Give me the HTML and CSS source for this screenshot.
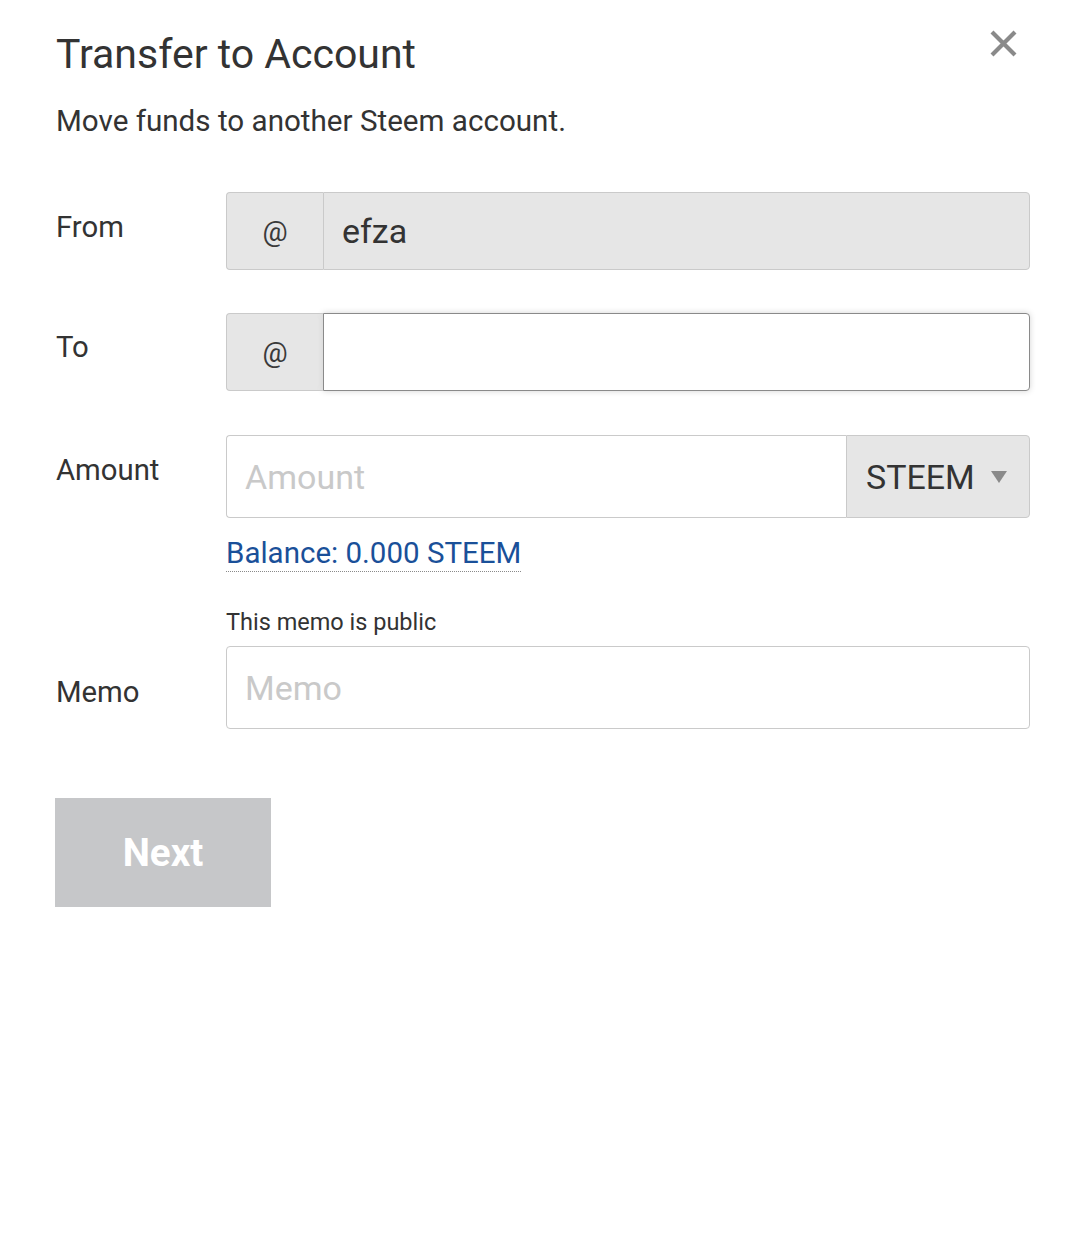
FILE: index.html
```html
<!DOCTYPE html>
<html lang="en">
<head>
<meta charset="utf-8">
<title>Transfer to Account</title>
<link rel="stylesheet" href="styles.css">
</head>
<body>
<div class="dialog">
  <div class="header">
    <h1 class="title">Transfer to Account</h1>
    <button class="close" aria-label="Close">
      <svg width="27" height="27" viewBox="0 0 27 27"><path d="M2 2L25 25M25 2L2 25" stroke="#8a8a8a" stroke-width="4.2" stroke-linecap="butt"/></svg>
    </button>
  </div>
  <p class="subtitle">Move funds to another Steem account.</p>

  <div class="row row-from">
    <div class="label">From</div>
    <div class="field">
      <div class="group">
        <span class="addon">@</span>
        <input class="input input-disabled" type="text" value="efza" disabled>
      </div>
    </div>
  </div>

  <div class="row row-to">
    <div class="label">To</div>
    <div class="field">
      <div class="group">
        <span class="addon">@</span>
        <input class="input input-focus" type="text" value="">
      </div>
    </div>
  </div>

  <div class="row row-amount">
    <div class="label">Amount</div>
    <div class="field">
      <div class="group group-tall">
        <input class="input input-amount" type="text" placeholder="Amount">
        <div class="select">STEEM <span class="caret"></span></div>
      </div>
      <a class="balance">Balance: 0.000 STEEM</a>
    </div>
  </div>

  <div class="row row-memo">
    <div class="label label-memo">Memo</div>
    <div class="field">
      <div class="note">This memo is public</div>
      <input class="input input-memo" type="text" placeholder="Memo">
    </div>
  </div>

  <button class="next">Next</button>
</div>
</body>
</html>
```

FILE: styles.css
```css
html, body {
  margin: 0;
  padding: 0;
  background: #fff;
}
body {
  font-family: Roboto, "Liberation Sans", sans-serif;
  color: #333;
}
.dialog {
  padding: 29px 50px 0 56px;
}
.header {
  display: flex;
  justify-content: space-between;
  align-items: flex-start;
}
.title {
  margin: 0;
  font-size: 41px;
  line-height: 50px;
  font-weight: 400;
  color: #333;
}
.close {
  margin: 1px 13px 0 0;
  padding: 0;
  border: 0;
  background: none;
  width: 27px;
  height: 27px;
  display: block;
}
.close svg { display: block; }
.subtitle {
  margin: 24px 0 0 0;
  font-size: 29.6px;
  line-height: 36px;
  color: #333;
}
.row {
  display: flex;
}
.row-from { margin-top: 53px; }
.row-to { margin-top: 43px; }
.row-amount { margin-top: 44px; }
.row-memo { margin-top: 36px; }
.label {
  width: 170px;
  flex: none;
  font-size: 29.3px;
  line-height: 36px;
  padding-top: 17px;
  color: #333;
}
.label-memo { padding-top: 66px; }
.row-to .label { padding-top: 16px; }
.field {
  flex: 1;
  display: flex;
  flex-direction: column;
  align-items: flex-start;
}
.group {
  display: flex;
  width: 100%;
  height: 78px;
}
.group-tall { height: 83px; }
.addon {
  width: 97px;
  flex: none;
  box-sizing: border-box;
  background: #e6e6e6;
  border: 1px solid #cacaca;
  border-right: 0;
  border-radius: 4px 0 0 4px;
  display: flex;
  align-items: center;
  justify-content: center;
  font-size: 28px;
  color: #3a3a3a;
}
.input {
  flex: 1;
  min-width: 0;
  box-sizing: border-box;
  height: 100%;
  margin: 0;
  padding: 0 18px;
  font-family: Roboto, "Liberation Sans", sans-serif;
  font-size: 34px;
  color: #333;
  background: #fff;
  border: 1px solid #cacaca;
  outline: none;
}
.input::placeholder { color: #c9c9c9; }
.input-disabled {
  background: #e6e6e6;
  border-radius: 0 4px 4px 0;
  color: #333;
  -webkit-text-fill-color: #333;
  opacity: 1;
}
.input-focus {
  border: 1px solid #8a8a8a;
  border-radius: 0 4px 4px 0;
  box-shadow: 0 0 6px #d4d4d4;
}
.input-amount {
  border-radius: 4px 0 0 4px;
  border-right: 0;
}
.select {
  width: 184px;
  flex: none;
  box-sizing: border-box;
  background: #e6e6e6;
  border: 1px solid #cacaca;
  border-radius: 0 4px 4px 0;
  display: flex;
  align-items: center;
  padding-left: 19px;
  font-size: 34px;
  color: #333;
}
.caret {
  margin-left: 16px;
  width: 0;
  height: 0;
  border-left: 8.5px solid transparent;
  border-right: 8.5px solid transparent;
  border-top: 12px solid #8a8a8a;
}
.balance {
  margin-top: 17px;
  font-size: 29.5px;
  line-height: 36px;
  color: #1a5099;
  border-bottom: 1px dotted #8a8a8a;
  display: inline-block;
}
.note {
  font-size: 23.5px;
  line-height: 28px;
  color: #333;
  margin-bottom: 10px;
}
.input-memo {
  flex: none;
  width: 100%;
  height: 83px;
  border-radius: 4px;
}
.next {
  margin: 69px 0 0 -1px;
  width: 216px;
  height: 109px;
  border: 0;
  background: #c6c7c9;
  color: #fff;
  font-family: Roboto, "Liberation Sans", sans-serif;
  font-weight: 700;
  font-size: 38.5px;
  padding: 0;
  display: block;
}
```
